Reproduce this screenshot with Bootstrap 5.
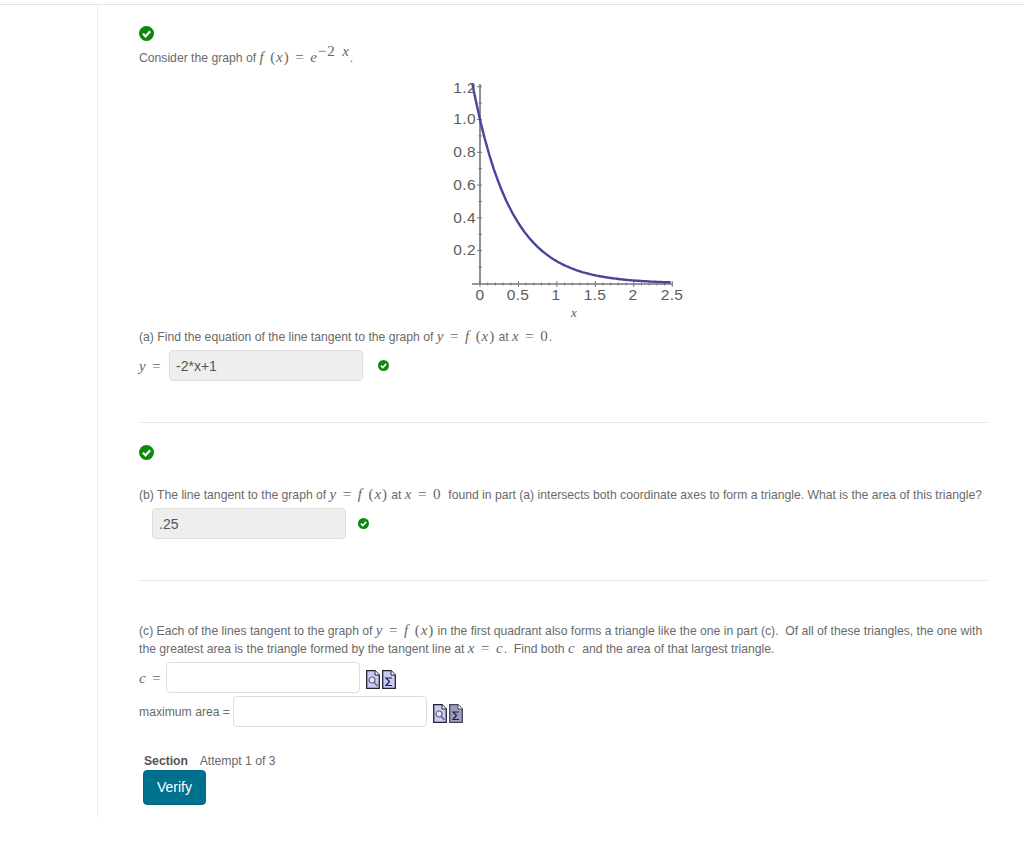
<!DOCTYPE html>
<html lang="en">
<head>
    <meta charset="UTF-8">
    <title>Tangent lines</title>
    <link href="https://cdn.jsdelivr.net/npm/bootstrap@5.3.0/dist/css/bootstrap.min.css" rel="stylesheet">
    <style>
        body { font-family: "Liberation Sans", Arial, sans-serif; font-size: 12.18px; line-height: 18px; color: #6a6a6a; background: #fff; }
        .top-rule { margin-top: 4px; border-top: 1px solid #e2e2e2; }
        .sheet { margin-left: 97px; height: 813px; border-left: 1px solid #eee; padding: 21px 36px 0 41px; }
        .mth { font-family: "Liberation Serif", serif; font-size: 15px; line-height: 0; color: #666; letter-spacing: .9px; word-spacing: 1px; }
        .mth i { font-family: "Liberation Serif", serif; }
        .mth sup { font-size: 15px; line-height: 0; top: -.4em; word-spacing: 2px; }
        .ok-big { width: 15px; height: 15px; display: block; }
        .ok-small { width: 11px; height: 11px; display: block; }
        .prob-text { margin: 0; }
        .graph { display: block; width: 260px; height: 250px; margin: 3px 0 8px 301px; }
        .graph text { font-family: "Liberation Sans", Arial, sans-serif; font-size: 15.5px; letter-spacing: .4px; fill: #5c5c5c; }
        .answer.form-control { width: 194px; height: 31px; padding: 0 6px; font-size: 14px; line-height: 18px; color: #555; border-color: #ddd; border-radius: 4px; box-shadow: none; flex: none; }
        .answer.done, .answer.done:read-only { background: #eee; }
        .sep { margin: 0; border: 0; border-top: 1px solid #e9e9e9; opacity: 1; }
        .page-ico { width: 14px; height: 19px; display: block; }
        .tools { margin: 3px 0 0 6px; gap: 2px; }
        .verify.btn { display: block; width: 63px; height: 35px; margin-left: 4px; padding: 0; font-size: 14px; color: #fff; background: #00708f; border: 1px solid #006a86; border-radius: 4px; }
        .row-a { margin-top: 4px; }
        .row-tight { margin-top: 3px; }
        .row-b { margin: 4px 0 0 13px; }
        .gap-chk-a { margin-left: 15px; }
        .gap-chk-b { margin-left: 12px; }
        .lbl-y { width: 30px; flex: none; line-height: 18px; }
        .lbl-c { width: 27px; flex: none; line-height: 18px; }
        .lbl-max { width: 94px; flex: none; }
        .sec-a { padding-bottom: 41px; }
        .sec-b { padding: 22px 0 41px; }
        .sec-b .prob-text { margin-top: 26px; }
        .sec-c { padding-top: 41px; }
        .attempt { margin: 25px 0 0 5px; }
        .attempt b { color: #555; margin-right: 9px; }
    </style>
</head>
<body>
<svg width="0" height="0" class="position-absolute">
    <symbol id="chk" viewBox="0 0 16 16">
        <circle cx="8" cy="8" r="8" fill="#0a8a0a"/>
        <path d="M4.2 8.3 7 11 11.9 5.7" fill="none" stroke="#fff" stroke-width="2.4"/>
    </symbol>
    <symbol id="ico-view" viewBox="0 0 14 19">
        <path d="M.7.7H9L13.3 5V18.3H.7Z" fill="#c9c9f5" stroke="#223" stroke-width="1.3"/>
        <path d="M9 .7V5H13.3" fill="#fff" stroke="#223"/>
        <circle cx="6" cy="10" r="3" fill="#e6e6fa" stroke="#667" stroke-width="1.2"/>
        <path d="M8 12.2 11.5 16" stroke="#667" stroke-width="1.5"/>
    </symbol>
    <symbol id="ico-sum" viewBox="0 0 14 19">
        <path d="M.7.7H9L13.3 5V18.3H.7Z" fill="#c9c9f5" stroke="#223" stroke-width="1.3"/>
        <path d="M9 .7V5H13.3" fill="#fff" stroke="#223"/>
        <path d="M10 8H4L7.5 11.5 4 15.5H10" fill="none" stroke="#223" stroke-width="1.2"/>
    </symbol>
    <symbol id="ico-sum-dim" viewBox="0 0 14 19">
        <path d="M.7.7H9L13.3 5V18.3H.7Z" fill="#9c9cc4" stroke="#445" stroke-width="1.3"/>
        <path d="M9 .7V5H13.3" fill="#fff" stroke="#445"/>
        <path d="M10 8H4L7.5 11.5 4 15.5H10" fill="none" stroke="#223" stroke-width="1.2"/>
    </symbol>
</svg>

<div class="top-rule">
    <div class="sheet">
        <div class="sec-a">
            <svg class="ok-big mb-2"><use href="#chk"/></svg>
            <p class="prob-text">Consider the graph of <span class="mth"><i>f</i> (<i>x</i>) = <i>e</i><sup>&minus;2 <i>x</i></sup></span>.</p>

            <svg class="graph" viewBox="440 70 260 250">
                <g id="ticks" stroke="#777" stroke-width="1"></g>
                <path d="M480 84V284M472 284H673" stroke="#777" stroke-width="1.6" fill="none"/>
                <polyline id="curve" fill="none" stroke="#46469c" stroke-width="2.4"/>
                <g text-anchor="end">
                    <text x="476" y="93">1.2</text>
                    <text x="476" y="124">1.0</text>
                    <text x="476" y="157">0.8</text>
                    <text x="476" y="190">0.6</text>
                    <text x="476" y="223">0.4</text>
                    <text x="476" y="255">0.2</text>
                </g>
                <g text-anchor="middle">
                    <text x="480" y="300">0</text>
                    <text x="518" y="300">0.5</text>
                    <text x="556" y="300">1</text>
                    <text x="595" y="300">1.5</text>
                    <text x="633" y="300">2</text>
                    <text x="672" y="300">2.5</text>
                    <text x="574" y="317" style="font-family: 'Liberation Serif', serif; font-style: italic; font-size: 13px">x</text>
                </g>
            </svg>

            <p class="prob-text">(a) Find the equation of the line tangent to the graph of <span class="mth"><i>y</i> = <i>f</i> (<i>x</i>)</span> at <span class="mth"><i>x</i> = 0</span>.</p>
            <div class="d-flex align-items-center row-a">
                <span class="mth lbl-y"><i>y</i> =</span>
                <input class="form-control answer done" type="text" value="-2*x+1" readonly>
                <svg class="ok-small gap-chk-a"><use href="#chk"/></svg>
            </div>
        </div>

        <hr class="sep">

        <div class="sec-b">
            <svg class="ok-big"><use href="#chk"/></svg>
            <p class="prob-text">(b) The line tangent to the graph of <span class="mth"><i>y</i> = <i>f</i> (<i>x</i>)</span> at <span class="mth"><i>x</i> = 0</span>&nbsp; found in part (a) intersects both coordinate axes to form a triangle. What is the area of this triangle?</p>
            <div class="d-flex align-items-center row-b">
                <input class="form-control answer done" type="text" value=".25" readonly>
                <svg class="ok-small gap-chk-b"><use href="#chk"/></svg>
            </div>
        </div>

        <hr class="sep">

        <div class="sec-c">
            <p class="prob-text">(c) Each of the lines tangent to the graph of <span class="mth"><i>y</i> = <i>f</i> (<i>x</i>)</span> in the first quadrant also forms a triangle like the one in part (c).&nbsp; Of all of these triangles, the one with the greatest area is the triangle formed by the tangent line at <span class="mth"><i>x</i> = <i>c</i></span>.&nbsp; Find both <span class="mth"><i>c</i></span>&nbsp; and the area of that largest triangle.</p>
            <div class="d-flex align-items-center row-a">
                <span class="mth lbl-c"><i>c</i> =</span>
                <input class="form-control answer" type="text">
                <div class="d-flex tools">
                    <svg class="page-ico"><use href="#ico-view"/></svg>
                    <svg class="page-ico"><use href="#ico-sum"/></svg>
                </div>
            </div>
            <div class="d-flex align-items-center row-tight">
                <span class="lbl-max">maximum area =</span>
                <input class="form-control answer" type="text">
                <div class="d-flex tools">
                    <svg class="page-ico"><use href="#ico-view"/></svg>
                    <svg class="page-ico"><use href="#ico-sum-dim"/></svg>
                </div>
            </div>
            <div class="attempt"><b>Section</b> Attempt 1 of 3</div>
            <button class="btn verify" type="button">Verify</button>
        </div>
    </div>
</div>

<script>
    // Plot y = e^(-2x) on the graph's pixel scale
    const px = x => 480 + x * 76.9;
    const py = y => 283.5 - y * 164;
    const pts = [];
    for (let x = -0.1; x <= 2.5; x += 0.02) pts.push(px(x).toFixed(1) + ',' + py(Math.exp(-2 * x)).toFixed(1));
    document.getElementById('curve').setAttribute('points', pts.join(' '));

    // Axis tick marks
    let ticks = '';
    for (let i = 0; i <= 25; i++) ticks += `<path d="M${px(i / 10)} ${i % 5 ? 282.5 : 281}V${i % 5 ? 285.5 : 287}"/>`;
    for (let i = 1; i <= 12; i++) ticks += `<path d="M${i % 2 ? 478.5 : 477} ${py(i / 10)}H482"/>`;
    document.getElementById('ticks').innerHTML = ticks;
</script>
<script src="https://cdn.jsdelivr.net/npm/bootstrap@5.3.0/dist/js/bootstrap.bundle.min.js"></script>
</body>
</html>
